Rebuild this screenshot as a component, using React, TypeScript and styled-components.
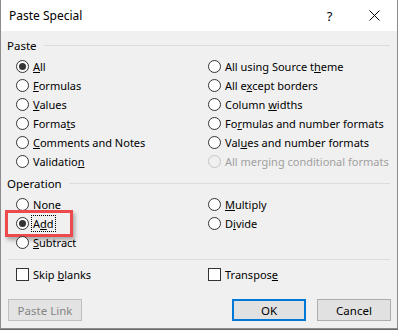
import React from 'react'
import styled, { createGlobalStyle } from 'styled-components'

const GlobalStyle = createGlobalStyle`
  html, body {
    margin: 0;
    padding: 0;
    background: #6b6b6b;
  }
  #root {
    width: 398px;
    height: 330px;
  }
`

const Window = styled.div`
  width: 398px;
  height: 329px;
  box-sizing: border-box;
  border: 1px solid #8c8c8c;
  border-top: none;
  background: #f0f0f0;
  display: flex;
  flex-direction: column;
  font-family: "Noto Sans", "Open Sans", sans-serif;
  font-size: 11px;
  color: #000;
`

const TitleBar = styled.div`
  height: 31px;
  background: #fff;
  display: flex;
  align-items: center;
  padding-left: 8px;
  flex-shrink: 0;
`

const Title = styled.div`
  flex: 1;
  font-size: 12px;
`

const TitleButton = styled.div`
  width: 45px;
  height: 31px;
  display: flex;
  align-items: center;
  justify-content: center;
  font-size: 13px;
`

const Body = styled.div`
  padding: 6px 6px 0 6px;
  display: flex;
  flex-direction: column;
`

const GroupHeader = styled.div<{ $gap?: number }>`
  display: flex;
  align-items: center;
  height: 16px;
  margin-top: ${p => p.$gap ?? 0}px;
  gap: 7px;
  font-size: 11.5px;
`

const GroupLine = styled.div`
  flex: 1;
  height: 1px;
  background: #dcdcdc;
  margin-right: 1px;
`

const OptionGrid = styled.div`
  display: grid;
  grid-template-columns: 192px 1fr;
  grid-auto-rows: 19px;
  margin-top: 4px;
  padding-left: 9px;
`

const Option = styled.label<{ $disabled?: boolean }>`
  position: relative;
  display: flex;
  align-items: center;
  gap: 4px;
  white-space: nowrap;
  color: ${p => (p.$disabled ? '#a0a0a0' : '#000')};
`

const Radio = styled.span<{ $checked?: boolean; $disabled?: boolean }>`
  width: 13px;
  height: 13px;
  box-sizing: border-box;
  border-radius: 50%;
  border: 1px solid ${p => (p.$disabled ? '#c4c4c4' : '#333')};
  background: ${p => (p.$disabled ? '#f0f0f0' : '#fff')};
  display: flex;
  align-items: center;
  justify-content: center;
  flex-shrink: 0;

  &::after {
    content: '';
    width: 7px;
    height: 7px;
    border-radius: 50%;
    background: #333;
    display: ${p => (p.$checked ? 'block' : 'none')};
  }
`

const Checkbox = styled.span`
  width: 13px;
  height: 13px;
  box-sizing: border-box;
  border: 1px solid #333;
  background: #fff;
  flex-shrink: 0;
`

const Key = styled.u`
  text-decoration-thickness: 1px;
  text-underline-offset: 1px;
`

const FocusText = styled.span`
  outline: 1px dotted #000;
  outline-offset: 0px;
  padding: 0 1px;
  margin-left: -1px;
`

const Highlight = styled.div`
  position: absolute;
  left: -11px;
  top: -4px;
  width: 68px;
  height: 27px;
  box-sizing: border-box;
  border: 3px solid #ec4a4c;
  box-shadow: 2px 3px 4px rgba(0, 0, 0, 0.3);
  pointer-events: none;
`

const Separator = styled.div`
  height: 1px;
  background: #dcdcdc;
  margin: 7px 1px 0 1px;
`

const CheckGrid = styled(OptionGrid)`
  margin-top: 5px;
`

const ButtonRow = styled.div`
  display: flex;
  align-items: center;
  margin-top: 15px;
  padding-left: 1px;
  gap: 11px;
`

const Spacer = styled.div`
  flex: 1;
`

const Button = styled.button<{ $primary?: boolean }>`
  width: 74px;
  height: 22px;
  box-sizing: border-box;
  font-family: inherit;
  font-size: 11.5px;
  color: ${p => (p.disabled ? '#838383' : '#000')};
  background: ${p => (p.disabled ? '#e3e3e3' : '#e1e1e1')};
  border: ${p => (p.$primary ? '2px solid #0078d7' : p.disabled ? '1px solid #bfbfbf' : '1px solid #adadad')};
  padding: 0;
  margin: 0;
`

type Opt = { label: React.ReactNode; checked?: boolean; disabled?: boolean }

const k = (before: string, key: string, after: string) => (
  <>
    {before}
    <Key>{key}</Key>
    {after}
  </>
)

const pasteOptions: Opt[] = [
  { label: k('', 'A', 'll'), checked: true },
  { label: k('All using Source t', 'h', 'eme') },
  { label: k('', 'F', 'ormulas') },
  { label: k('All e', 'x', 'cept borders') },
  { label: k('', 'V', 'alues') },
  { label: k('Column ', 'w', 'idths') },
  { label: k('Forma', 't', 's') },
  { label: k('Fo', 'r', 'mulas and number formats') },
  { label: k('', 'C', 'omments and Notes') },
  { label: k('Val', 'u', 'es and number formats') },
  { label: k('Validatio', 'n', '') },
  { label: 'All merging conditional formats', disabled: true },
]

const Close = () => (
  <svg width="11" height="11" viewBox="0 0 11 11">
    <path d="M0.5 0.5 L10.5 10.5 M10.5 0.5 L0.5 10.5" stroke="#000" strokeWidth="1" />
  </svg>
)

export default function App() {
  return (
    <>
      <GlobalStyle />
      <Window>
        <TitleBar>
          <Title>Paste Special</Title>
          <TitleButton>?</TitleButton>
          <TitleButton>
            <Close />
          </TitleButton>
        </TitleBar>
        <Body>
          <GroupHeader>
            <span>Paste</span>
            <GroupLine />
          </GroupHeader>
          <OptionGrid>
            {pasteOptions.map((o, i) => (
              <Option key={i} $disabled={o.disabled}>
                <Radio $checked={o.checked} $disabled={o.disabled} />
                <span>{o.label}</span>
              </Option>
            ))}
          </OptionGrid>

          <GroupHeader $gap={4}>
            <span>Operation</span>
            <GroupLine />
          </GroupHeader>
          <OptionGrid>
            <Option>
              <Radio />
              <span>N<Key>o</Key>ne</span>
            </Option>
            <Option>
              <Radio />
              <span><Key>M</Key>ultiply</span>
            </Option>
            <Option>
              <Highlight />
              <Radio $checked />
              <FocusText>A<Key>d</Key>d</FocusText>
            </Option>
            <Option>
              <Radio />
              <span>D<Key>i</Key>vide</span>
            </Option>
            <Option>
              <Radio />
              <span><Key>S</Key>ubtract</span>
            </Option>
          </OptionGrid>

          <Separator />

          <CheckGrid>
            <Option>
              <Checkbox />
              <span>Skip <Key>b</Key>lanks</span>
            </Option>
            <Option>
              <Checkbox />
              <span>Transpos<Key>e</Key></span>
            </Option>
          </CheckGrid>

          <ButtonRow>
            <Button disabled>Paste Link</Button>
            <Spacer />
            <Button $primary>OK</Button>
            <Button>Cancel</Button>
          </ButtonRow>
        </Body>
      </Window>
    </>
  )
}
